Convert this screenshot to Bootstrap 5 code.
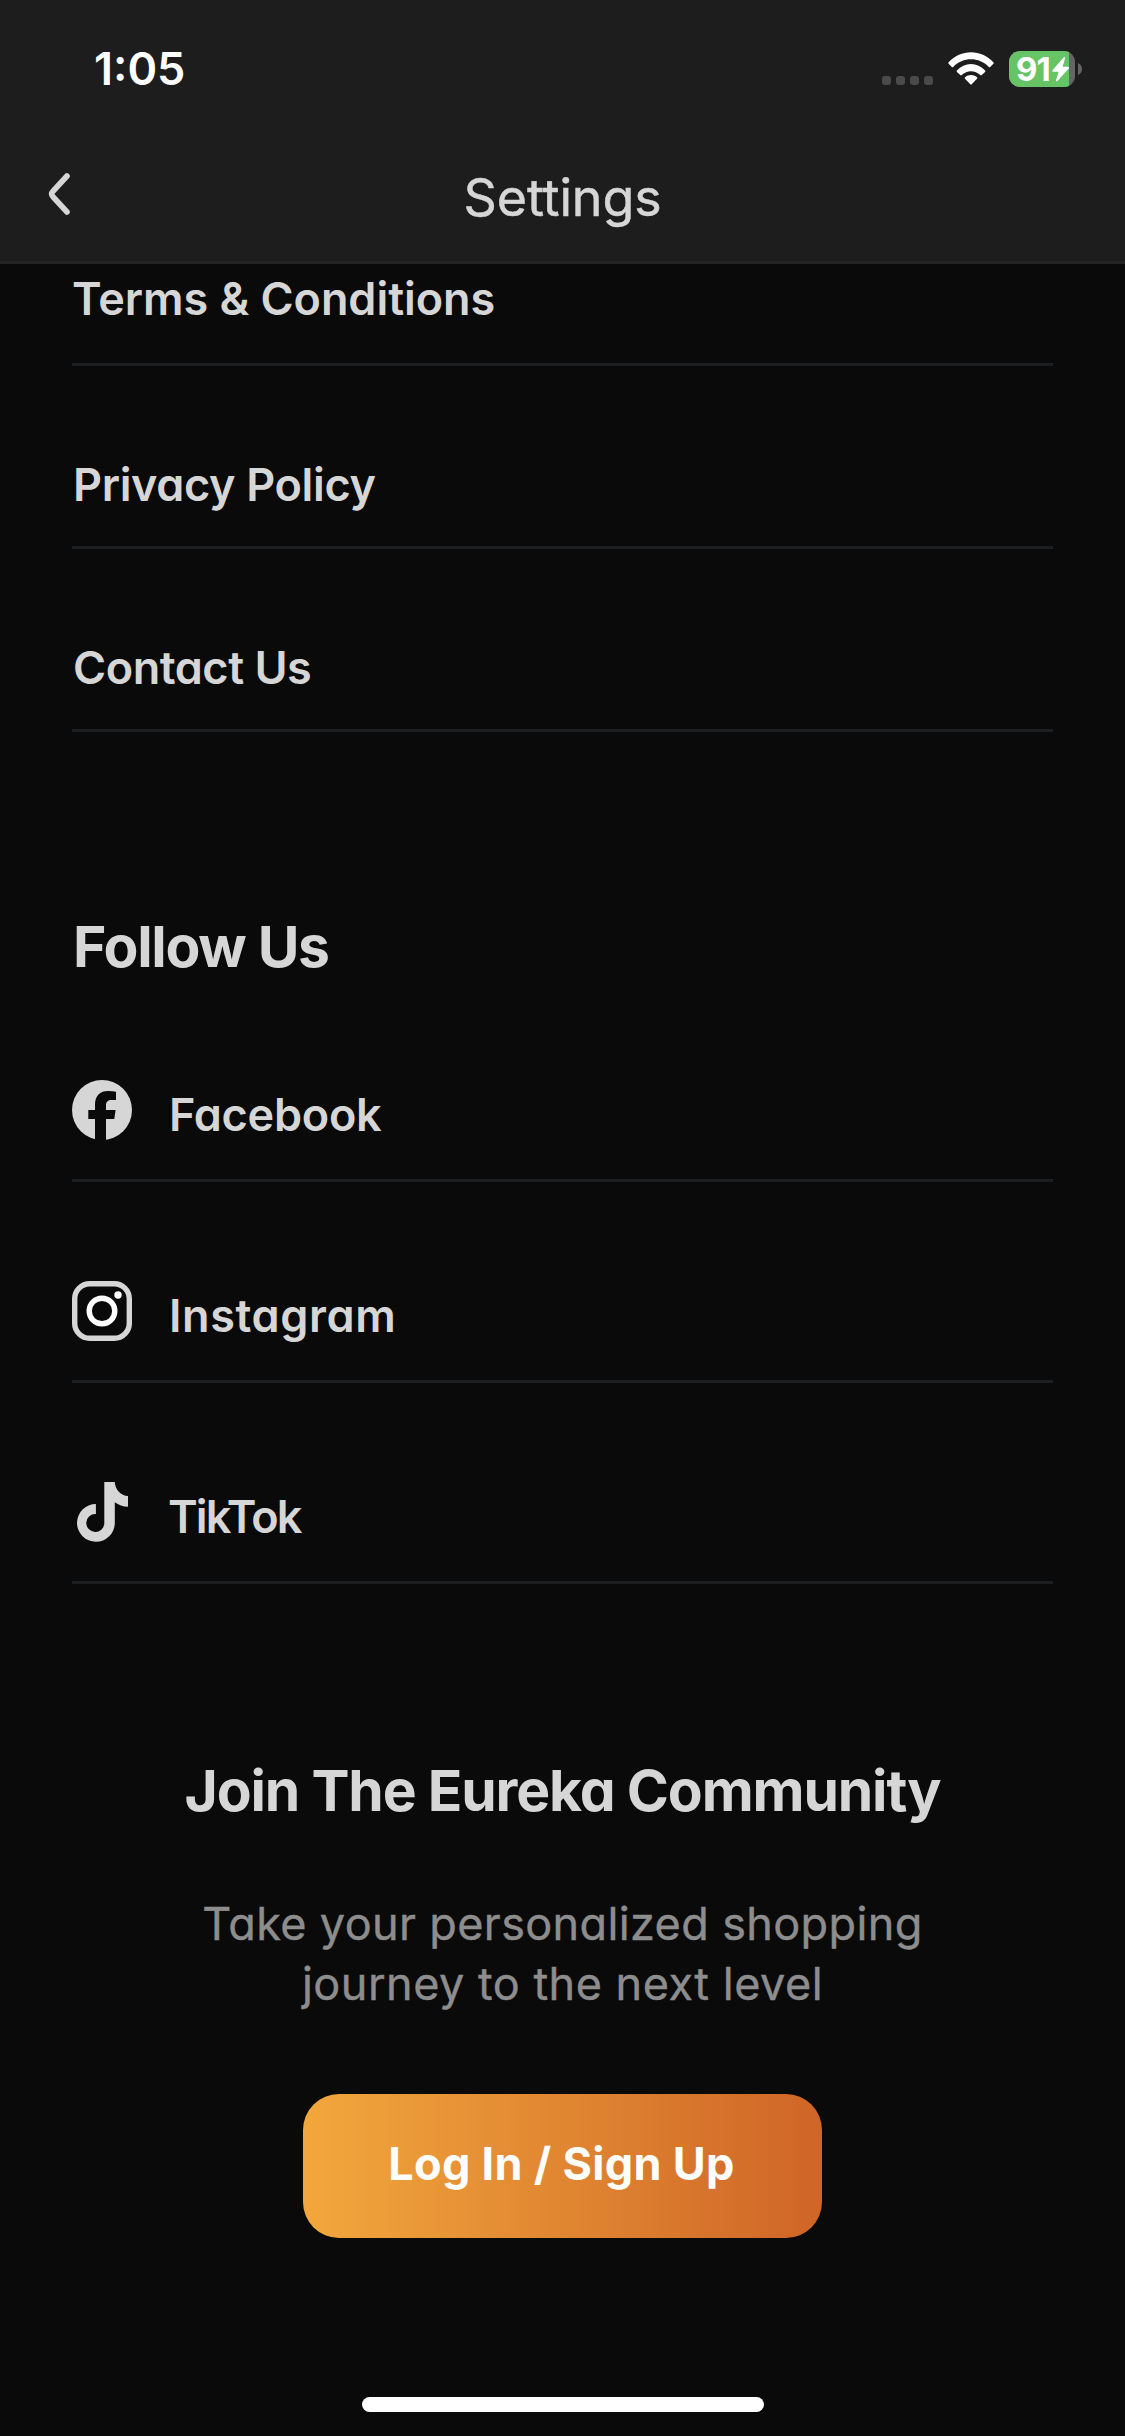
<!doctype html>
<html lang="en">
<head>
<meta charset="utf-8">
<meta name="viewport" content="width=device-width, initial-scale=1">
<title>Settings</title>
<link href="https://cdn.jsdelivr.net/npm/bootstrap@5.3.0/dist/css/bootstrap.min.css" rel="stylesheet">
<style>
body{background:#0a0a0a;color:#d6d6d6;font-family:Inter,"Liberation Sans",sans-serif;font-feature-settings:"cv11","ss03";font-size:45px;line-height:60px}
.screen{height:2436px}
.topbar{height:264px;background:#1d1d1d;border-bottom:3px solid #242424}
.status{height:138px;padding:0 43px 0 94px}
.clock{font-weight:600;color:#fff;font-feature-settings:normal}
.dots{margin-right:15px}
.wifi{margin-right:15px}
.battery{overflow:visible}
.navrow{height:123px;padding:0 48px}
.navrow .back{width:22px;margin-bottom:11px}
.navrow h1{font-size:52px;font-weight:400;line-height:60px;letter-spacing:-.15px;margin-bottom:3px;-webkit-text-stroke:.5px}
.page-body{padding:0 72px}
.item{height:183px;padding:0 0 31px 0;border-bottom:3px solid #1d1e1f;font-weight:600;color:inherit;text-decoration:none}
.item.first{height:102px;padding-bottom:34px}
.terms{letter-spacing:-.05px}
.privacy{letter-spacing:-.35px;padding-left:1px}
.contact{letter-spacing:-.45px;padding-left:1px}
.social{height:201px;padding-bottom:34px;gap:37px}
.social svg{margin-bottom:5px}
.facebook{letter-spacing:-.25px}
.instagram{letter-spacing:.6px}
.tiktok{letter-spacing:-1.9px;margin-left:-1px}
.heading{font-size:57px;font-weight:700;line-height:70px;margin:0}
.follow{padding-top:180px;height:249px;letter-spacing:-1.3px;padding-left:1px}
.join{margin-top:172px;letter-spacing:-1.15px}
.blurb{margin:68px 0 80px;color:#8d8d8d;-webkit-text-stroke:.4px}
.blurb .line-a{letter-spacing:.37px}
.blurb .line-b{letter-spacing:.5px}
.login{width:519px;height:144px;border-radius:36px;background:linear-gradient(90deg,#f2a73c,#cf6527);color:#fffefb;font-size:45px;font-weight:700;line-height:60px;letter-spacing:.3px;padding:0 2px 5px 0}
.home{width:402px;height:15px;border-radius:8px;background:#fff;margin-bottom:24px}
</style>
<script src="https://cdn.jsdelivr.net/npm/bootstrap@5.3.0/dist/js/bootstrap.bundle.min.js"></script>
</head>
<body>
<div class="screen d-flex flex-column overflow-hidden">
  <header class="topbar flex-shrink-0">
    <div class="status d-flex align-items-center justify-content-between">
      <span class="clock">1:05</span>
      <div class="d-flex align-items-center">
        <svg class="dots" width="51" height="36" viewBox="0 0 51 36" fill="#4a4a4a"><rect y="25" width="9" height="9" rx="3"/><rect x="14" y="25" width="9" height="9" rx="3"/><rect x="28" y="25" width="9" height="9" rx="3"/><rect x="42" y="25" width="9" height="9" rx="3"/></svg>
        <svg class="wifi" width="46" height="36" viewBox="0 0 46 36" fill="#fff"><path d="M.6 11.300C12.500-2.200 33.500-2.200 45.400 11.300Q46 12 45.400 12.700L42.200 16Q41.500 16.600 40.800 15.900C31 5.800 15 5.800 5.200 15.900Q4.500 16.600 3.800 16L.6 12.700Q0 12 .6 11.300Z"/><path d="M8.900 19.500C16.500 10.800 29.500 10.800 37.100 19.500Q37.700 20.200 37.100 20.900L33.700 24.100Q33 24.700 32.300 24.100C27 18.900 19 18.900 13.700 24.100Q13 24.700 12.300 24.100L8.900 20.900Q8.300 20.200 8.900 19.500Z"/><path d="M17 26.300C20.500 23.200 25.500 23.200 29 26.300Q29.700 27 29 27.700L23.700 33.300Q23 34 22.300 33.300L17 27.700Q16.300 27 17 26.300Z"/></svg>
        <svg class="battery" width="73" height="36" viewBox="0 0 73 36"><defs><clipPath id="cell"><rect width="66" height="36" rx="11"/></clipPath></defs><g clip-path="url(#cell)"><rect width="66" height="36" fill="#656565"/><rect width="60" height="36" fill="#66c466"/></g><path d="M69 12Q73 14 73 18T69 24Z" fill="#656565"/><text x="7" y="30" font-family="Inter, sans-serif" font-size="33" font-weight="700" letter-spacing="-1" fill="#fff">91</text><path d="M54.500 6.500 43.500 19.300Q42.800 20.800 44.200 20.800H49.600L47 29.300Q47 31 48.500 30L60 17.200Q60.600 15.700 59.300 15.700H53.600L56 7.500Q56.100 5.300 54.500 6.500Z" fill="#fff"/></svg>
      </div>
    </div>
    <nav class="navrow d-flex align-items-center justify-content-between">
      <svg class="back" height="42" viewBox="0 0 22 42" fill="none" stroke="#d6d6d6" stroke-width="5.600" stroke-linecap="round"><path d="M19 3 5 18.200Q2.200 21 5 23.800L19 39"/></svg>
      <h1>Settings</h1>
      <span class="back"></span>
    </nav>
  </header>
  <main class="page-body flex-grow-1">
    <a class="item first terms d-flex align-items-end" href="#">Terms &amp; Conditions</a>
    <a class="item privacy d-flex align-items-end" href="#">Privacy Policy</a>
    <a class="item contact d-flex align-items-end" href="#">Contact Us</a>
    <h2 class="heading follow">Follow Us</h2>
    <a class="item social d-flex align-items-end" href="#">
      <svg width="60" height="60" viewBox="0 0 60 60"><circle cx="30" cy="30" r="30" fill="#d6d6d6"/><path d="M23 60V39H16.300V30H23V25C23 15.500 28 11 36 11Q41 11 44 11.700V20H39.500C36 20 34 22 34 25V30H43.600L42.300 39H34V60Z" fill="#0a0a0a"/></svg>
      <span class="facebook">Facebook</span></a>
    <a class="item social d-flex align-items-end" href="#">
      <svg width="60" height="60" viewBox="0 0 60 60" fill="none"><rect x="2.700" y="2.700" width="54.600" height="54.600" rx="15" stroke="#d6d6d6" stroke-width="5.400"/><circle cx="30" cy="30" r="12.800" stroke="#fff" stroke-width="5.400"/><circle cx="46" cy="14" r="3.700" fill="#fff"/></svg>
      <span class="instagram">Instagram</span></a>
    <a class="item social d-flex align-items-end" href="#">
      <svg width="60" height="60" viewBox="0 0 60 60" fill="#d6d6d6"><path d="M32.300 0H42.800C43 7.500 49 13.800 56 14V24.800C51 24.800 46.500 23 42.800 20.300V41A18.900 18.900 0 1 1 23.900 22V32A9 9 0 1 0 32.300 41Z"/></svg>
      <span class="tiktok">TikTok</span></a>
    <section class="text-center d-flex flex-column align-items-center">
      <h2 class="heading join">Join The Eureka Community</h2>
      <p class="blurb"><span class="line-a">Take your personalized shopping</span><br><span class="line-b">journey to the next level</span></p>
      <button class="btn login border-0" type="button">Log In / Sign Up</button>
    </section>
  </main>
  <div class="home mx-auto flex-shrink-0"></div>
</div>
</body>
</html>
